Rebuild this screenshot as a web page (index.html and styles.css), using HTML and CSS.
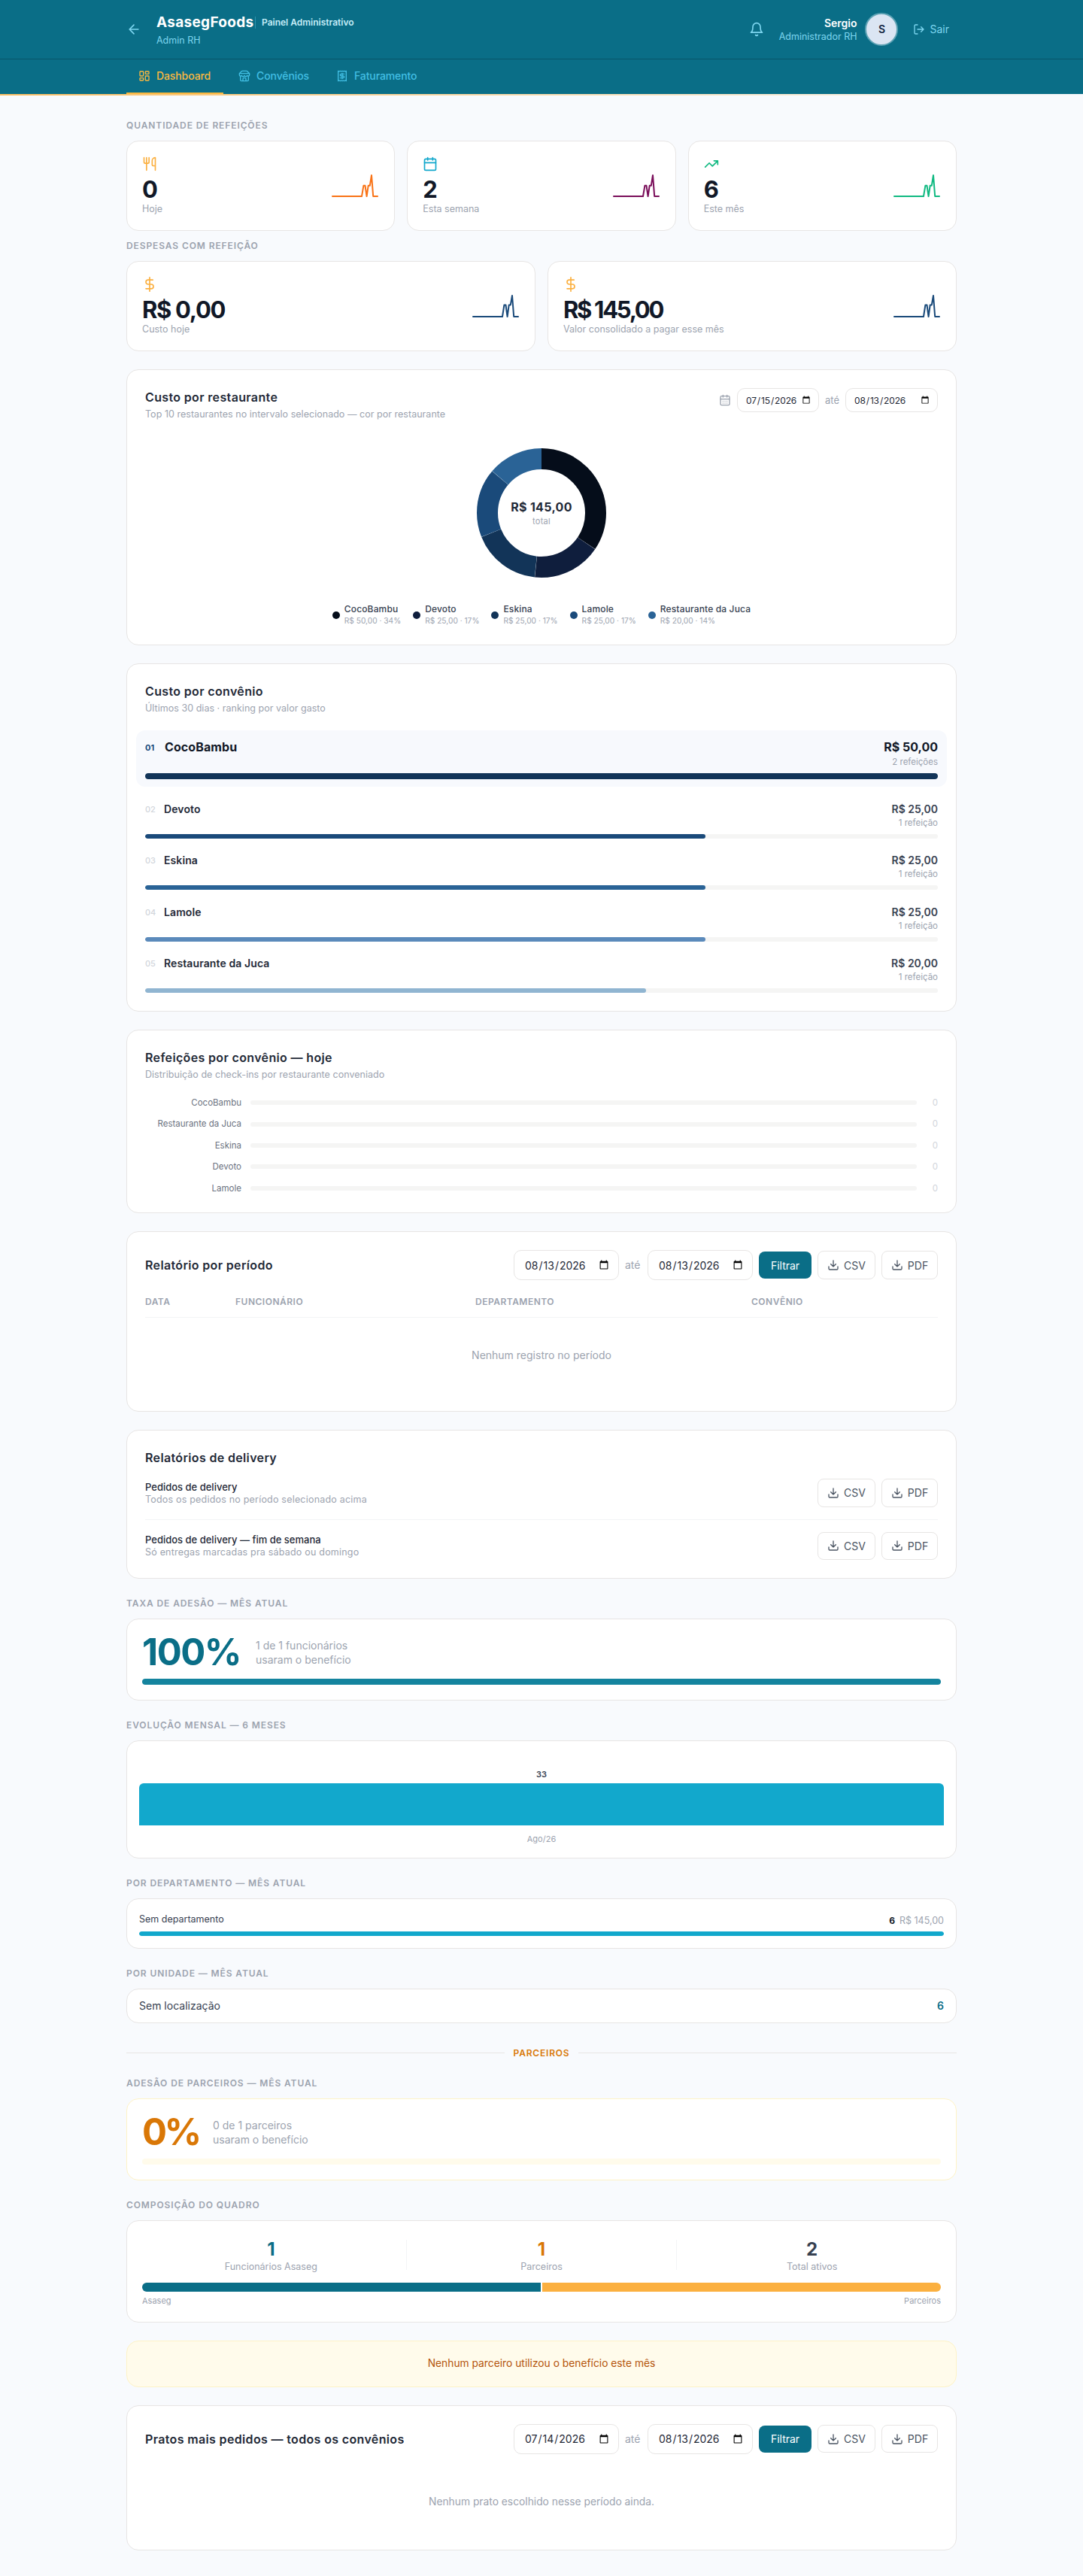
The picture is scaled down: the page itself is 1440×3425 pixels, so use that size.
FILE: index.html
```html
<!DOCTYPE html>
<html lang="pt-BR">
  <head>
    <meta charset="UTF-8" />
    <title>AsasegFoods - Painel Administrativo</title>
    <link rel="stylesheet" href="styles.css">
  </head>
  <body>
    <svg class="sprite" width="0" height="0">
      <symbol id="download" viewBox="0 0 24 24"><path d="M12 3v12M7 10l5 5 5-5M21 15v4a2 2 0 0 1-2 2H5a2 2 0 0 1-2-2v-4" /></symbol>
      <symbol id="dollar" viewBox="0 0 24 24"><path d="M12 1v22M17 5H9.500a3.500 3.500 0 0 0 0 7h5a3.500 3.500 0 0 1 0 7H6" /></symbol>
      <symbol id="spark-qtd" viewBox="0 0 64 32"><path d="M2 30H41L43.400 15.800H45.500L47.600 30L49.700 15.800H51.800L54 2L56.200 30H62" /></symbol>
      <symbol id="spark-custo" viewBox="0 0 64 32"><path d="M2 30H41L43.400 14.500H45.500L47.600 30L49.700 14.500H51.800L54 2L56.200 30H62" /></symbol>
    </svg>

    <header class="topo">
      <div class="container topo-linha">
        <a class="voltar" href="#"><svg class="icone i20" viewBox="0 0 24 24"><path d="M12 19l-7-7 7-7M19 12H5" /></svg></a>
        <div class="marca">
          <div class="marca-linha">
            <span class="marca-nome">AsasegFoods</span>
            <span class="marca-painel">Painel Administrativo</span>
          </div>
          <div class="marca-perfil">Admin RH</div>
        </div>
        <div class="usuario">
          <svg class="icone i20 sino" viewBox="0 0 24 24"><path d="M6 8a6 6 0 0 1 12 0c0 7 3 9 3 9H3s3-2 3-9M10.300 21a1.940 1.940 0 0 0 3.400 0" /></svg>
          <div class="usuario-dados">
            <div class="usuario-nome">Sergio</div>
            <div class="usuario-cargo">Administrador RH</div>
          </div>
          <div class="avatar">S</div>
          <a class="sair" href="#"><svg class="icone i16" viewBox="0 0 24 24"><path d="M9 21H5a2 2 0 0 1-2-2V5a2 2 0 0 1 2-2h4M16 17l5-5-5-5M21 12H9" /></svg>Sair</a>
        </div>
      </div>
      <nav class="menu">
        <div class="container menu-linha">
          <a class="aba aba-dashboard ativa" href="#"><svg class="icone i16" viewBox="0 0 24 24"><rect x="3" y="3" width="7" height="9" rx="1" /><rect x="14" y="3" width="7" height="5" rx="1" /><rect x="14" y="12" width="7" height="9" rx="1" /><rect x="3" y="16" width="7" height="5" rx="1" /></svg>Dashboard</a>
          <a class="aba aba-convenios" href="#"><svg class="icone i16" viewBox="0 0 24 24"><path d="M2 7l4.400-4.400A2 2 0 0 1 7.800 2h8.400a2 2 0 0 1 1.400.600L22 7M4 12v8a2 2 0 0 0 2 2h12a2 2 0 0 0 2-2v-8M15 22v-4a2 2 0 0 0-2-2h-2a2 2 0 0 0-2 2v4M2 7h20v3a2 2 0 0 1-2 2 2.700 2.700 0 0 1-2.700-1 2.700 2.700 0 0 1-5.300 0 2.700 2.700 0 0 1-5.300 0A2.700 2.700 0 0 1 4 12a2 2 0 0 1-2-2z" /></svg>Convênios</a>
          <a class="aba" href="#"><svg class="icone i16" viewBox="0 0 24 24"><path d="M4 2v20l2-1 2 1 2-1 2 1 2-1 2 1 2-1 2 1V2l-2 1-2-1-2 1-2-1-2 1-2-1-2 1zM16 8h-6a2 2 0 1 0 0 4h4a2 2 0 1 1 0 4H8M12 17.500v-11" /></svg>Faturamento</a>
        </div>
      </nav>
    </header>
    <div class="faixa"></div>

    <main class="container conteudo">
      <h2 class="rotulo">Quantidade de refeições</h2>
      <div class="grade tres">
        <div class="card indicador">
          <div>
            <svg class="icone i20 laranja" viewBox="0 0 24 24"><path d="M3 2v7c0 1.100.900 2 2 2h4a2 2 0 0 0 2-2V2M7 2v20M21 15V2a5 5 0 0 0-5 5v6c0 1.100.900 2 2 2h3zm0 0v7" /></svg>
            <div class="valor">0</div>
            <div class="legenda">Hoje</div>
          </div>
          <svg class="spark" stroke="#f97316"><use href="#spark-qtd" /></svg>
        </div>
        <div class="card indicador">
          <div>
            <svg class="icone i20 azul" viewBox="0 0 24 24"><rect x="3" y="4" width="18" height="18" rx="2" /><path d="M16 2v4M8 2v4M3 10h18" /></svg>
            <div class="valor">2</div>
            <div class="legenda">Esta semana</div>
          </div>
          <svg class="spark" stroke="#7a0e5a"><use href="#spark-qtd" /></svg>
        </div>
        <div class="card indicador">
          <div>
            <svg class="icone i20 verde" viewBox="0 0 24 24"><path d="M22 7l-8.500 8.500-5-5L2 17M16 7h6v6" /></svg>
            <div class="valor">6</div>
            <div class="legenda">Este mês</div>
          </div>
          <svg class="spark" stroke="#10b981"><use href="#spark-qtd" /></svg>
        </div>
      </div>

      <h2 class="rotulo junto">Despesas com refeição</h2>
      <div class="grade dois">
        <div class="card indicador">
          <div>
            <svg class="icone i20 laranja"><use href="#dollar" /></svg>
            <div class="valor">R$ 0,00</div>
            <div class="legenda">Custo hoje</div>
          </div>
          <svg class="spark" stroke="#1a4a7a"><use href="#spark-custo" /></svg>
        </div>
        <div class="card indicador">
          <div>
            <svg class="icone i20 laranja"><use href="#dollar" /></svg>
            <div class="valor longo">R$ 145,00</div>
            <div class="legenda">Valor consolidado a pagar esse mês</div>
          </div>
          <svg class="spark" stroke="#1a4a7a"><use href="#spark-custo" /></svg>
        </div>
      </div>

      <section class="card painel">
        <div class="painel-topo">
          <div>
            <h3 class="titulo">Custo por restaurante</h3>
            <p class="subtitulo">Top 10 restaurantes no intervalo selecionado — cor por restaurante</p>
          </div>
          <div class="periodo">
            <svg class="icone i16" viewBox="0 0 24 24"><rect x="3" y="4" width="18" height="18" rx="2" /><path d="M16 2v4M8 2v4M3 10h18M8 14h.010M12 14h.010M16 14h.010M8 18h.010M12 18h.010M16 18h.010" /></svg>
            <input class="data curta" type="date" value="2026-07-15" />
            <span>até</span>
            <input class="data media" type="date" value="2026-08-13" />
          </div>
        </div>
        <div class="rosca">
          <svg width="176" height="176" viewBox="0 0 176 176">
            <g fill="none" stroke-width="28" transform="rotate(-90 88 88)">
              <circle cx="88" cy="88" r="72" pathLength="145" stroke="#050d1a" stroke-dasharray="49.930 200" />
              <circle cx="88" cy="88" r="72" pathLength="145" stroke="#0f1e3d" stroke-dasharray="24.930 200" stroke-dashoffset="-50" />
              <circle cx="88" cy="88" r="72" pathLength="145" stroke="#123458" stroke-dasharray="24.930 200" stroke-dashoffset="-75" />
              <circle cx="88" cy="88" r="72" pathLength="145" stroke="#1a4a7a" stroke-dasharray="24.930 200" stroke-dashoffset="-100" />
              <circle cx="88" cy="88" r="72" pathLength="145" stroke="#2a6396" stroke-dasharray="20 200" stroke-dashoffset="-125" />
            </g>
            <text class="rosca-valor" x="88" y="86">R$ 145,00</text>
            <text class="rosca-total" x="88" y="103">total</text>
          </svg>
        </div>
        <ul class="itens">
          <li><i class="ponto c1"></i><div><b>CocoBambu</b><small>R$ 50,00 · 34%</small></div></li>
          <li><i class="ponto c2"></i><div><b>Devoto</b><small>R$ 25,00 · 17%</small></div></li>
          <li><i class="ponto c3"></i><div><b>Eskina</b><small>R$ 25,00 · 17%</small></div></li>
          <li><i class="ponto c4"></i><div><b>Lamole</b><small>R$ 25,00 · 17%</small></div></li>
          <li><i class="ponto c5"></i><div><b>Restaurante da Juca</b><small>R$ 20,00 · 14%</small></div></li>
        </ul>
      </section>

      <section class="card painel">
        <h3 class="titulo">Custo por convênio</h3>
        <p class="subtitulo">Últimos 30 dias · ranking por valor gasto</p>
        <div class="ranking">
          <div class="posicao primeiro">
            <div class="posicao-linha"><span class="num">01</span><span class="nome">CocoBambu</span><div class="custo"><b>R$ 50,00</b><small>2 refeições</small></div></div>
            <div class="trilho"><div class="barra c3" style="width: 100%"></div></div>
          </div>
          <div class="posicao">
            <div class="posicao-linha"><span class="num">02</span><span class="nome">Devoto</span><div class="custo"><b>R$ 25,00</b><small>1 refeição</small></div></div>
            <div class="trilho"><div class="barra c4" style="width: 70.700%"></div></div>
          </div>
          <div class="posicao">
            <div class="posicao-linha"><span class="num">03</span><span class="nome">Eskina</span><div class="custo"><b>R$ 25,00</b><small>1 refeição</small></div></div>
            <div class="trilho"><div class="barra c5" style="width: 70.700%"></div></div>
          </div>
          <div class="posicao">
            <div class="posicao-linha"><span class="num">04</span><span class="nome">Lamole</span><div class="custo"><b>R$ 25,00</b><small>1 refeição</small></div></div>
            <div class="trilho"><div class="barra c6" style="width: 70.700%"></div></div>
          </div>
          <div class="posicao">
            <div class="posicao-linha"><span class="num">05</span><span class="nome">Restaurante da Juca</span><div class="custo"><b>R$ 20,00</b><small>1 refeição</small></div></div>
            <div class="trilho"><div class="barra c7" style="width: 63.200%"></div></div>
          </div>
        </div>
      </section>

      <section class="card painel">
        <h3 class="titulo">Refeições por convênio — hoje</h3>
        <p class="subtitulo">Distribuição de check-ins por restaurante conveniado</p>
        <div class="checkins">
          <div class="checkin"><span>CocoBambu</span><div class="trilho"></div><em>0</em></div>
          <div class="checkin"><span>Restaurante da Juca</span><div class="trilho"></div><em>0</em></div>
          <div class="checkin"><span>Eskina</span><div class="trilho"></div><em>0</em></div>
          <div class="checkin"><span>Devoto</span><div class="trilho"></div><em>0</em></div>
          <div class="checkin"><span>Lamole</span><div class="trilho"></div><em>0</em></div>
        </div>
      </section>

      <section class="card painel">
        <div class="filtro">
          <h3 class="titulo">Relatório por período</h3>
          <input class="data" type="date" value="2026-08-13" />
          <span class="ate">até</span>
          <input class="data" type="date" value="2026-08-13" />
          <button class="filtrar">Filtrar</button>
          <button class="exportar csv"><svg class="icone i16"><use href="#download" /></svg>CSV</button>
          <button class="exportar"><svg class="icone i16"><use href="#download" /></svg>PDF</button>
        </div>
        <table class="tabela">
          <thead>
            <tr><th class="col-data">Data</th><th class="col-func">Funcionário</th><th class="col-dep">Departamento</th><th>Convênio</th></tr>
          </thead>
          <tbody>
            <tr><td colspan="4">Nenhum registro no período</td></tr>
          </tbody>
        </table>
      </section>

      <section class="card painel">
        <h3 class="titulo">Relatórios de delivery</h3>
        <div class="delivery">
          <div class="delivery-texto"><b>Pedidos de delivery</b><small>Todos os pedidos no período selecionado acima</small></div>
          <button class="exportar csv"><svg class="icone i16"><use href="#download" /></svg>CSV</button>
          <button class="exportar"><svg class="icone i16"><use href="#download" /></svg>PDF</button>
        </div>
        <div class="delivery">
          <div class="delivery-texto"><b>Pedidos de delivery — fim de semana</b><small>Só entregas marcadas pra sábado ou domingo</small></div>
          <button class="exportar csv"><svg class="icone i16"><use href="#download" /></svg>CSV</button>
          <button class="exportar"><svg class="icone i16"><use href="#download" /></svg>PDF</button>
        </div>
      </section>

      <h2 class="rotulo">Taxa de adesão — mês atual</h2>
      <div class="card adesao">
        <div class="adesao-linha"><strong>100%</strong><p>1 de 1 funcionários<br />usaram o benefício</p></div>
        <div class="trilho"><div class="barra" style="width: 100%"></div></div>
      </div>

      <h2 class="rotulo">Evolução mensal — 6 meses</h2>
      <div class="card evolucao">
        <span class="mes-total">33</span>
        <div class="mes-barra"></div>
        <span class="mes">Ago/26</span>
      </div>

      <h2 class="rotulo">Por departamento — mês atual</h2>
      <div class="card departamento">
        <div class="departamento-linha"><span>Sem departamento</span><b>6</b><small>R$ 145,00</small></div>
        <div class="trilho"><div class="barra" style="width: 100%"></div></div>
      </div>

      <h2 class="rotulo">Por unidade — mês atual</h2>
      <div class="card unidade"><span>Sem localização</span><b>6</b></div>

      <div class="divisor">Parceiros</div>

      <h2 class="rotulo">Adesão de parceiros — mês atual</h2>
      <div class="card adesao parceiros">
        <div class="adesao-linha"><strong>0%</strong><p>0 de 1 parceiros<br />usaram o benefício</p></div>
        <div class="trilho"></div>
      </div>

      <h2 class="rotulo">Composição do quadro</h2>
      <div class="card quadro">
        <div class="quadro-linha">
          <div class="quadro-item asaseg"><b>1</b><span>Funcionários Asaseg</span></div>
          <i></i>
          <div class="quadro-item parc"><b>1</b><span>Parceiros</span></div>
          <i></i>
          <div class="quadro-item"><b>2</b><span>Total ativos</span></div>
        </div>
        <div class="quadro-barra"><div class="parte-asaseg"></div><div class="parte-parc"></div></div>
        <div class="quadro-nomes"><span>Asaseg</span><span>Parceiros</span></div>
      </div>

      <div class="card aviso">Nenhum parceiro utilizou o benefício este mês</div>

      <section class="card painel">
        <div class="filtro">
          <h3 class="titulo">Pratos mais pedidos — todos os convênios</h3>
          <input class="data" type="date" value="2026-07-14" />
          <span class="ate">até</span>
          <input class="data" type="date" value="2026-08-13" />
          <button class="filtrar">Filtrar</button>
          <button class="exportar csv"><svg class="icone i16"><use href="#download" /></svg>CSV</button>
          <button class="exportar"><svg class="icone i16"><use href="#download" /></svg>PDF</button>
        </div>
        <p class="vazio">Nenhum prato escolhido nesse período ainda.</p>
      </section>
    </main>
  </body>
</html>
```
FILE: styles.css
```css
* {
  box-sizing: border-box;
  margin: 0;
  padding: 0;
}
body {
  font-family: Inter, "Liberation Sans", sans-serif;
  font-size: 14px;
  line-height: 20px;
  color: #1f2937;
  background: #f8fafd;
}
a {
  text-decoration: none;
}
b,
strong {
  font-weight: 600;
}
em,
i {
  font-style: normal;
}
.sprite {
  display: block;
  height: 0;
}
.container {
  max-width: 1152px;
  margin: 0 auto;
  padding: 0 24px;
}
.icone {
  display: block;
  flex: none;
  fill: none;
  stroke: currentColor;
  stroke-width: 2;
  stroke-linecap: round;
  stroke-linejoin: round;
}
.i16 {
  width: 16px;
  height: 16px;
}
.i20 {
  width: 20px;
  height: 20px;
}

/* Topo */
.topo {
  background: #0a6e87;
}
.topo-linha {
  display: flex;
  align-items: center;
  height: 78px;
}
.voltar {
  color: #7dd6f0;
  margin-right: 20px;
}
.marca {
  flex: 1;
  padding-top: 5px;
}
.marca-linha {
  display: flex;
  align-items: center;
  height: 22px;
}
.marca-nome {
  color: #fff;
  font-size: 19px;
  font-weight: 700;
  letter-spacing: 0.300px;
  width: 131px;
  white-space: nowrap;
}
.marca-painel {
  border-left: 1px solid #2f95ad;
  padding-left: 8px;
  line-height: 16px;
  font-size: 12px;
  font-weight: 600;
  color: #c5edf8;
}
.marca-perfil {
  margin-top: 3px;
  font-size: 12.500px;
  line-height: 20px;
  color: #7dd6f0;
}
.usuario {
  display: flex;
  align-items: center;
}
.sino {
  color: #7dd6f0;
  margin-right: 20px;
}
.usuario-dados {
  text-align: right;
  margin-right: 11px;
}
.usuario-nome {
  color: #fff;
  font-weight: 600;
  line-height: 19px;
}
.usuario-cargo {
  color: #7dd6f0;
  font-size: 12.500px;
  line-height: 18px;
}
.avatar {
  width: 44px;
  height: 44px;
  border-radius: 50%;
  border: 2px solid #5fa3b5;
  background: #dbe5f3;
  color: #0f1e3d;
  font-weight: 600;
  line-height: 40px;
  text-align: center;
  margin-right: 20px;
}
.sair {
  display: flex;
  align-items: center;
  gap: 6px;
  color: #7dd6f0;
  padding-right: 10px;
}
.menu {
  border-top: 1px solid #085468;
}
.menu-linha {
  display: flex;
  gap: 4px;
  height: 46px;
}
.aba {
  display: flex;
  align-items: center;
  gap: 8px;
  padding: 0 16px;
  color: #42bfe4;
  font-weight: 500;
  letter-spacing: -0.100px;
  border-bottom: 2px solid transparent;
}
.aba-dashboard {
  width: 129px;
}
.aba-convenios {
  width: 126px;
}
.aba.ativa {
  color: #fbb840;
  border-color: #fbb840;
}
.faixa {
  height: 2px;
  background: linear-gradient(90deg, rgba(251, 176, 64, 0.8), transparent);
}

/* Conteúdo */
.conteudo {
  padding-top: 31px;
  padding-bottom: 33px;
}
.rotulo {
  margin: 24px 0 12px;
  font-size: 12px;
  font-weight: 600;
  line-height: 17px;
  letter-spacing: 0.900px;
  text-transform: uppercase;
  color: #9ca3af;
}
.rotulo:first-child {
  margin-top: 0;
}
.rotulo.junto {
  margin-top: 11px;
}
.card {
  background: #fff;
  border: 1px solid #e7e5e4;
  border-radius: 16px;
}
.grade {
  display: grid;
  gap: 16px;
}
.tres {
  grid-template-columns: repeat(3, 1fr);
}
.dois {
  grid-template-columns: repeat(2, 1fr);
}
.indicador {
  display: flex;
  align-items: center;
  justify-content: space-between;
  padding: 20px;
}
.laranja {
  color: #fbb040;
}
.azul {
  color: #12a8cc;
}
.verde {
  color: #10b981;
}
.valor {
  margin-top: 8px;
  font-size: 31px;
  font-weight: 700;
  line-height: 32px;
  letter-spacing: -1.300px;
  color: #111827;
}
.valor.longo {
  letter-spacing: -2.300px;
}
.legenda {
  font-size: 12.500px;
  line-height: 20px;
  height: 18px;
  color: #9ca3af;
}
.spark {
  width: 64px;
  height: 32px;
  fill: none;
  stroke-width: 2;
  stroke-linecap: round;
  stroke-linejoin: round;
}
.painel {
  margin-top: 24px;
  padding: 24px;
}
.painel-topo {
  display: flex;
  justify-content: space-between;
  align-items: flex-start;
}
.titulo {
  font-size: 16px;
  font-weight: 600;
  line-height: 24px;
  letter-spacing: 0.350px;
}
.subtitulo {
  font-size: 12.500px;
  line-height: 21px;
  height: 20px;
  letter-spacing: 0.030px;
  color: #9ca3af;
}
.periodo {
  display: flex;
  align-items: center;
  gap: 8px;
  color: #9ca3af;
  font-size: 13px;
}
.data {
  width: 140px;
  height: 40px;
  padding: 0 10px 0 13px;
  border: 1px solid #e7e5e4;
  border-radius: 10px;
  background: #fff;
  font-family: inherit;
  font-size: 14px;
  color: #1f2937;
}
.data.curta,
.data.media {
  height: 32px;
  padding: 0 8px 0 10px;
  font-size: 12px;
  letter-spacing: -0.150px;
}
.data.curta {
  width: 109px;
}
.data.media {
  width: 123px;
}
.rosca {
  display: flex;
  justify-content: center;
  margin: 34px 0 32px;
}
.rosca-valor,
.rosca-total {
  text-anchor: middle;
  font-size: 16px;
  font-weight: 700;
  letter-spacing: 0.300px;
  fill: #1f2937;
}
.rosca-total {
  font-size: 11px;
  font-weight: 400;
  fill: #9ca3af;
}
.itens {
  display: flex;
  justify-content: center;
  gap: 16px;
  list-style: none;
}
.itens li {
  display: flex;
  align-items: center;
  gap: 6px;
}
.itens b {
  display: block;
  font-size: 12px;
  font-weight: 500;
  line-height: 16px;
  letter-spacing: 0.150px;
  color: #374151;
}
.itens small {
  display: block;
  font-size: 10.200px;
  line-height: 15px;
  color: #9ca3af;
}
.ponto {
  width: 10px;
  height: 10px;
  border-radius: 50%;
}
.c1 {
  background: #050d1a;
}
.c2 {
  background: #0f1e3d;
}
.c3 {
  background: #123458;
}
.c4 {
  background: #1a4a7a;
}
.c5 {
  background: #2a6396;
}
.c6 {
  background: #5b8abb;
}
.c7 {
  background: #90b5d1;
}

/* Barras */
.trilho {
  height: 6px;
  border-radius: 3px;
  background: #f5f5f4;
  overflow: hidden;
}
.barra {
  height: 100%;
  border-radius: 3px;
}
.ranking {
  display: flex;
  flex-direction: column;
  gap: 18.500px;
  margin-top: 20px;
}
.posicao-linha {
  display: flex;
  align-items: flex-start;
  line-height: 21px;
}
.num {
  width: 25px;
  padding-top: 1px;
  font-size: 11px;
  font-weight: 500;
  color: #d1d5db;
}
.nome {
  flex: 1;
  font-weight: 600;
  letter-spacing: 0.100px;
}
.custo {
  text-align: right;
}
.custo b {
  display: block;
  color: #374151;
}
.custo small {
  display: block;
  font-size: 11.500px;
  line-height: 17px;
  color: #9ca3af;
}
.posicao .trilho {
  margin-top: 6px;
}
.primeiro {
  margin: 0 -12px;
  padding: 10px 12px;
  border-radius: 12px;
  background: #f7f9fd;
}
.primeiro .posicao-linha {
  line-height: 24px;
}
.primeiro .num {
  width: 26px;
  color: #1a4a7a;
  font-weight: 700;
}
.primeiro .nome,
.primeiro b {
  font-size: 16px;
  font-weight: 700;
  color: #111827;
}
.primeiro .trilho {
  height: 8px;
  border-radius: 4px;
}
.checkins {
  display: flex;
  flex-direction: column;
  gap: 12px;
  margin-top: 20px;
}
.checkin {
  display: flex;
  align-items: center;
  gap: 12px;
  font-size: 11.500px;
  line-height: 16.400px;
}
.checkin span {
  width: 128px;
  text-align: right;
  color: #6b7280;
}
.checkin .trilho {
  flex: 1;
}
.checkin em {
  width: 16px;
  text-align: right;
  color: #d1d5db;
}

/* Relatórios */
.filtro {
  display: flex;
  align-items: center;
  gap: 8px;
}
.filtro .titulo {
  flex: 1;
}
.ate {
  color: #9ca3af;
  width: 22px;
}
button {
  font-family: inherit;
  font-size: 14px;
}
.filtrar {
  width: 70px;
  height: 36px;
  border: none;
  border-radius: 8px;
  background: #0a6e87;
  color: #fff;
}
.exportar {
  display: flex;
  align-items: center;
  justify-content: center;
  gap: 6px;
  width: 75px;
  height: 37.500px;
  border: 1px solid #e7e5e4;
  border-radius: 8px;
  background: #fff;
  color: #4b5563;
}
.exportar.csv {
  width: 77px;
}
.tabela {
  width: 100%;
  margin-top: 16px;
  border-collapse: collapse;
  table-layout: fixed;
}
.tabela th {
  padding: 4px 0 12px;
  border-bottom: 1px solid #f3f4f6;
  font-size: 12px;
  font-weight: 600;
  line-height: 17px;
  letter-spacing: 0.500px;
  text-align: left;
  text-transform: uppercase;
  color: #9ca3af;
}
.col-data {
  width: 120px;
}
.col-func {
  width: 319px;
}
.col-dep {
  width: 367px;
}
.tabela td {
  padding: 40px 0;
  text-align: center;
  color: #9ca3af;
}
.delivery {
  display: flex;
  align-items: center;
  gap: 8px;
  padding: 16px 0;
  border-bottom: 1px solid #f3f4f6;
}
.delivery:last-child {
  padding-bottom: 0;
  border-bottom: none;
}
.delivery-texto {
  flex: 1;
}
.delivery-texto b {
  display: block;
  font-size: 13px;
  font-weight: 500;
  line-height: 18px;
}
.delivery-texto small {
  display: block;
  font-size: 12.500px;
  line-height: 16px;
  letter-spacing: 0.200px;
  color: #9ca3af;
}

/* Adesão */
.adesao {
  padding: 20px;
}
.adesao-linha {
  display: flex;
  align-items: center;
  gap: 20px;
  height: 48px;
}
.adesao strong {
  width: 131px;
  font-size: 49px;
  font-weight: 700;
  line-height: 48px;
  letter-spacing: -1.500px;
  color: #0a6e87;
}
.adesao p {
  line-height: 19px;
  color: #9ca3af;
}
.adesao .trilho {
  height: 8px;
  margin-top: 11px;
  border-radius: 4px;
}
.adesao .barra {
  background: #14849e;
}
.parceiros {
  border-color: #fef3c7;
}
.parceiros strong {
  width: 74px;
  letter-spacing: -3.500px;
  color: #d97706;
}
.parceiros .trilho {
  background: #fffbeb;
}
.evolucao {
  display: flex;
  flex-direction: column;
  height: 157px;
  padding: 36px 16px 16px;
  text-align: center;
}
.mes-total {
  font-size: 11px;
  font-weight: 600;
  line-height: 16px;
  color: #374151;
}
.mes-barra {
  height: 56px;
  margin: 4px 0 9px;
  border-radius: 6px 6px 0 0;
  background: #12a8cc;
}
.mes {
  font-size: 11px;
  line-height: 18px;
  color: #9ca3af;
}
.departamento {
  padding: 16px;
}
.departamento-linha {
  display: flex;
  gap: 6px;
  height: 21px;
  font-size: 12.500px;
  line-height: 21px;
  color: #374151;
}
.departamento-linha span {
  flex: 1;
}
.departamento-linha b {
  font-size: 12px;
  font-weight: 700;
  line-height: 25px;
  color: #111827;
}
.departamento-linha small {
  font-size: 12.500px;
  line-height: 25px;
  color: #9ca3af;
}
.departamento .trilho {
  margin-top: 6.400px;
}
.departamento .barra {
  background: #12a8cc;
}
.unidade {
  display: flex;
  justify-content: space-between;
  padding: 12px 16px;
  line-height: 19.400px;
  color: #374151;
}
.unidade b {
  color: #0a6e87;
}
.divisor {
  display: flex;
  align-items: center;
  gap: 12px;
  margin-top: 31px;
  font-size: 12px;
  font-weight: 600;
  line-height: 17px;
  letter-spacing: 0.800px;
  text-transform: uppercase;
  color: #d97706;
}
.divisor::before,
.divisor::after {
  content: "";
  flex: 1;
  height: 1px;
  background: #e7e5e4;
}
.divisor + .rotulo {
  margin-top: 23px;
}

/* Composição do quadro */
.quadro {
  padding: 20px;
}
.quadro-linha {
  display: flex;
  gap: 8px;
  margin-bottom: 12px;
}
.quadro-linha i {
  width: 1px;
  height: 40px;
  margin-top: 5px;
  background: #f3f4f6;
}
.quadro-item {
  flex: 1;
  padding-top: 4px;
  text-align: center;
}
.quadro-item b {
  display: block;
  font-size: 24px;
  font-weight: 700;
  line-height: 28px;
  color: #374151;
}
.quadro-item.asaseg b {
  color: #0a6e87;
}
.quadro-item.parc b {
  color: #d97706;
}
.quadro-item span {
  display: block;
  font-size: 12.500px;
  line-height: 18px;
  color: #9ca3af;
}
.quadro-barra {
  display: flex;
  gap: 2px;
  height: 12px;
  border-radius: 6px;
  overflow: hidden;
}
.parte-asaseg {
  flex: 1;
  background: #0a6e87;
}
.parte-parc {
  flex: 1;
  background: #fbb040;
}
.quadro-nomes {
  display: flex;
  justify-content: space-between;
  margin-top: 5px;
  font-size: 11px;
  line-height: 15.200px;
  color: #9ca3af;
}
.aviso {
  margin-top: 24px;
  padding: 20px;
  border-color: #fef3c7;
  background: #fffbeb;
  color: #b45309;
  font-size: 13.800px;
  line-height: 19.600px;
  text-align: center;
}
.vazio {
  padding: 53px 0 30px;
  text-align: center;
  font-size: 13.800px;
  color: #9ca3af;
}
```
